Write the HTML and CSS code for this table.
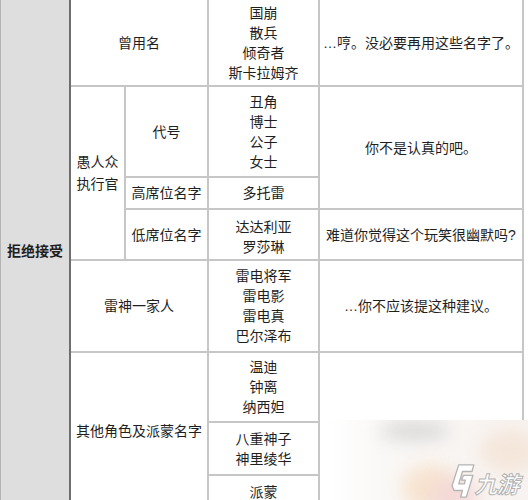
FILE: index.html
```html
<!DOCTYPE html>
<html lang="zh-CN">
<head>
<meta charset="utf-8">
<title>拒绝接受</title>
<link rel="stylesheet" href="styles.css">
</head>
<body>
<div class="page">
  <div class="side"><span>拒绝接受</span></div>
  <div class="table">
    <div class="cell c-used">曾用名</div>
    <div class="cell names n1">国崩<br>散兵<br>倾奇者<br>斯卡拉姆齐</div>
    <div class="cell resp r1">…哼。没必要再用这些名字了。</div>

    <div class="cell c-fool">愚人众<br>执行官</div>
    <div class="cell c-code">代号</div>
    <div class="cell names n2">丑角<br>博士<br>公子<br>女士</div>
    <div class="cell resp r2">你不是认真的吧。</div>

    <div class="cell c-high">高席位名字</div>
    <div class="cell names n3">多托雷</div>

    <div class="cell c-low">低席位名字</div>
    <div class="cell names n4">达达利亚<br>罗莎琳</div>
    <div class="cell resp r4">难道你觉得这个玩笑很幽默吗?</div>

    <div class="cell c-thunder">雷神一家人</div>
    <div class="cell names n5">雷电将军<br>雷电影<br>雷电真<br>巴尔泽布</div>
    <div class="cell resp r5">…你不应该提这种建议。</div>

    <div class="cell c-other">其他角色及派蒙名字</div>
    <div class="cell names n6">温迪<br>钟离<br>纳西妲</div>
    <div class="cell resp r6"></div>
    <div class="cell names n7">八重神子<br>神里绫华</div>
    <div class="cell names n8">派蒙</div>
  </div>
</div>

<div class="watermark">
  <div class="blob b-grey"></div>
  <div class="blob b-peach"></div>
  <div class="blob b-pink"></div>
  <div class="blob b-right"></div>
  <div class="logo">
    <svg class="logo-icon" width="25" height="36" viewBox="0 0 26 38">
      <path d="M9 2 H25 L23 9 H13 L9 22 H15 L16 18 H12 L14 13 H24 L17 36 H11 L13 29 H4 L2 24 Z" fill="#ffffff" stroke="#b4b4b4" stroke-width="1.4" stroke-linejoin="round"/>
    </svg>
    <span class="logo-text">九游</span>
  </div>
</div>
</body>
</html>
```

FILE: styles.css
```css
* {
  box-sizing: border-box;
}

html, body {
  margin: 0;
  padding: 0;
  background: #ffffff;
  width: 528px;
  height: 500px;
  overflow: hidden;
}

body {
  position: relative;
  font-family: "Liberation Sans", "Noto Sans CJK SC", sans-serif;
  font-size: 14px;
  color: #222222;
}

.page {
  display: flex;
  align-items: stretch;
}

.side {
  width: 71px;
  background: #dedede;
  border-left: 1px solid #b4b4b4;
  border-right: 2px solid #6e6e6e;
  display: flex;
  align-items: center;
  justify-content: center;
  padding-bottom: 8px;
  font-weight: 700;
  color: #1e1e1e;
  font-size: 14px;
}

.table {
  display: grid;
  grid-template-columns: 53px 81px 109px 202px;
  grid-template-rows: 85px 89px 30px 49px 90px 68px 51px 32px;
  gap: 2px;
  background: #c6c6c6;
  border-right: 2px solid #c6c6c6;
}

.cell {
  background: #ffffff;
  display: flex;
  align-items: center;
  justify-content: center;
  text-align: center;
  line-height: 20px;
  color: #1f1f1f;
}

.c-used { grid-column: 1 / 3; grid-row: 1; }
.n1 { grid-column: 3; grid-row: 1; }
.r1 { grid-column: 4; grid-row: 1; }

.c-fool { grid-column: 1; grid-row: 2 / 5; line-height: 22px; }
.c-code { grid-column: 2; grid-row: 2; }
.n2 { grid-column: 3; grid-row: 2; }
.r2 { grid-column: 4; grid-row: 2 / 4; }

.c-high { grid-column: 2; grid-row: 3; }
.n3 { grid-column: 3; grid-row: 3; }

.c-low { grid-column: 2; grid-row: 4; }
.n4 { grid-column: 3; grid-row: 4; padding-top: 4px; }
.r4 { grid-column: 4; grid-row: 4; }

.c-thunder { grid-column: 1 / 3; grid-row: 5; }
.n5 { grid-column: 3; grid-row: 5; }
.r5 { grid-column: 4; grid-row: 5; }

.c-other { grid-column: 1 / 3; grid-row: 6 / 9; }
.n6 { grid-column: 3; grid-row: 6; }
.r6 { grid-column: 4; grid-row: 6 / 9; }
.n7 { grid-column: 3; grid-row: 7; }
.n8 { grid-column: 3; grid-row: 8; }

/* watermark overlay */
.watermark {
  position: absolute;
  left: 330px;
  top: 420px;
  width: 198px;
  height: 80px;
  background: linear-gradient(90deg, rgba(255,255,255,0) 0px, rgba(250,248,246,0.95) 50px, #f8f3f0 100%);
  overflow: hidden;
}

.blob {
  position: absolute;
  border-radius: 50%;
  filter: blur(9px);
}

.b-grey {
  left: 50px;
  top: 3px;
  width: 70px;
  height: 16px;
  background: #d4d4d4;
}

.b-peach {
  left: 72px;
  top: 45px;
  width: 55px;
  height: 45px;
  background: #f7e3cf;
}

.b-pink {
  left: 100px;
  top: 58px;
  width: 48px;
  height: 36px;
  background: #f3d8d6;
}

.b-right {
  left: 150px;
  top: 10px;
  width: 60px;
  height: 42px;
  background: #f4e6da;
}

.logo {
  position: absolute;
  left: 120px;
  top: 43px;
  display: flex;
  align-items: center;
  gap: 2px;
}

.logo-icon {
  display: block;
}

.logo-text {
  font-family: "Noto Sans CJK SC", sans-serif;
  font-size: 23px;
  font-weight: 700;
  color: #ffffff;
  -webkit-text-stroke: 1px #b4b4b4;
  transform: skewX(-14deg);
  line-height: 30px;
  letter-spacing: -1px;
  margin-top: 4px;
}
```
